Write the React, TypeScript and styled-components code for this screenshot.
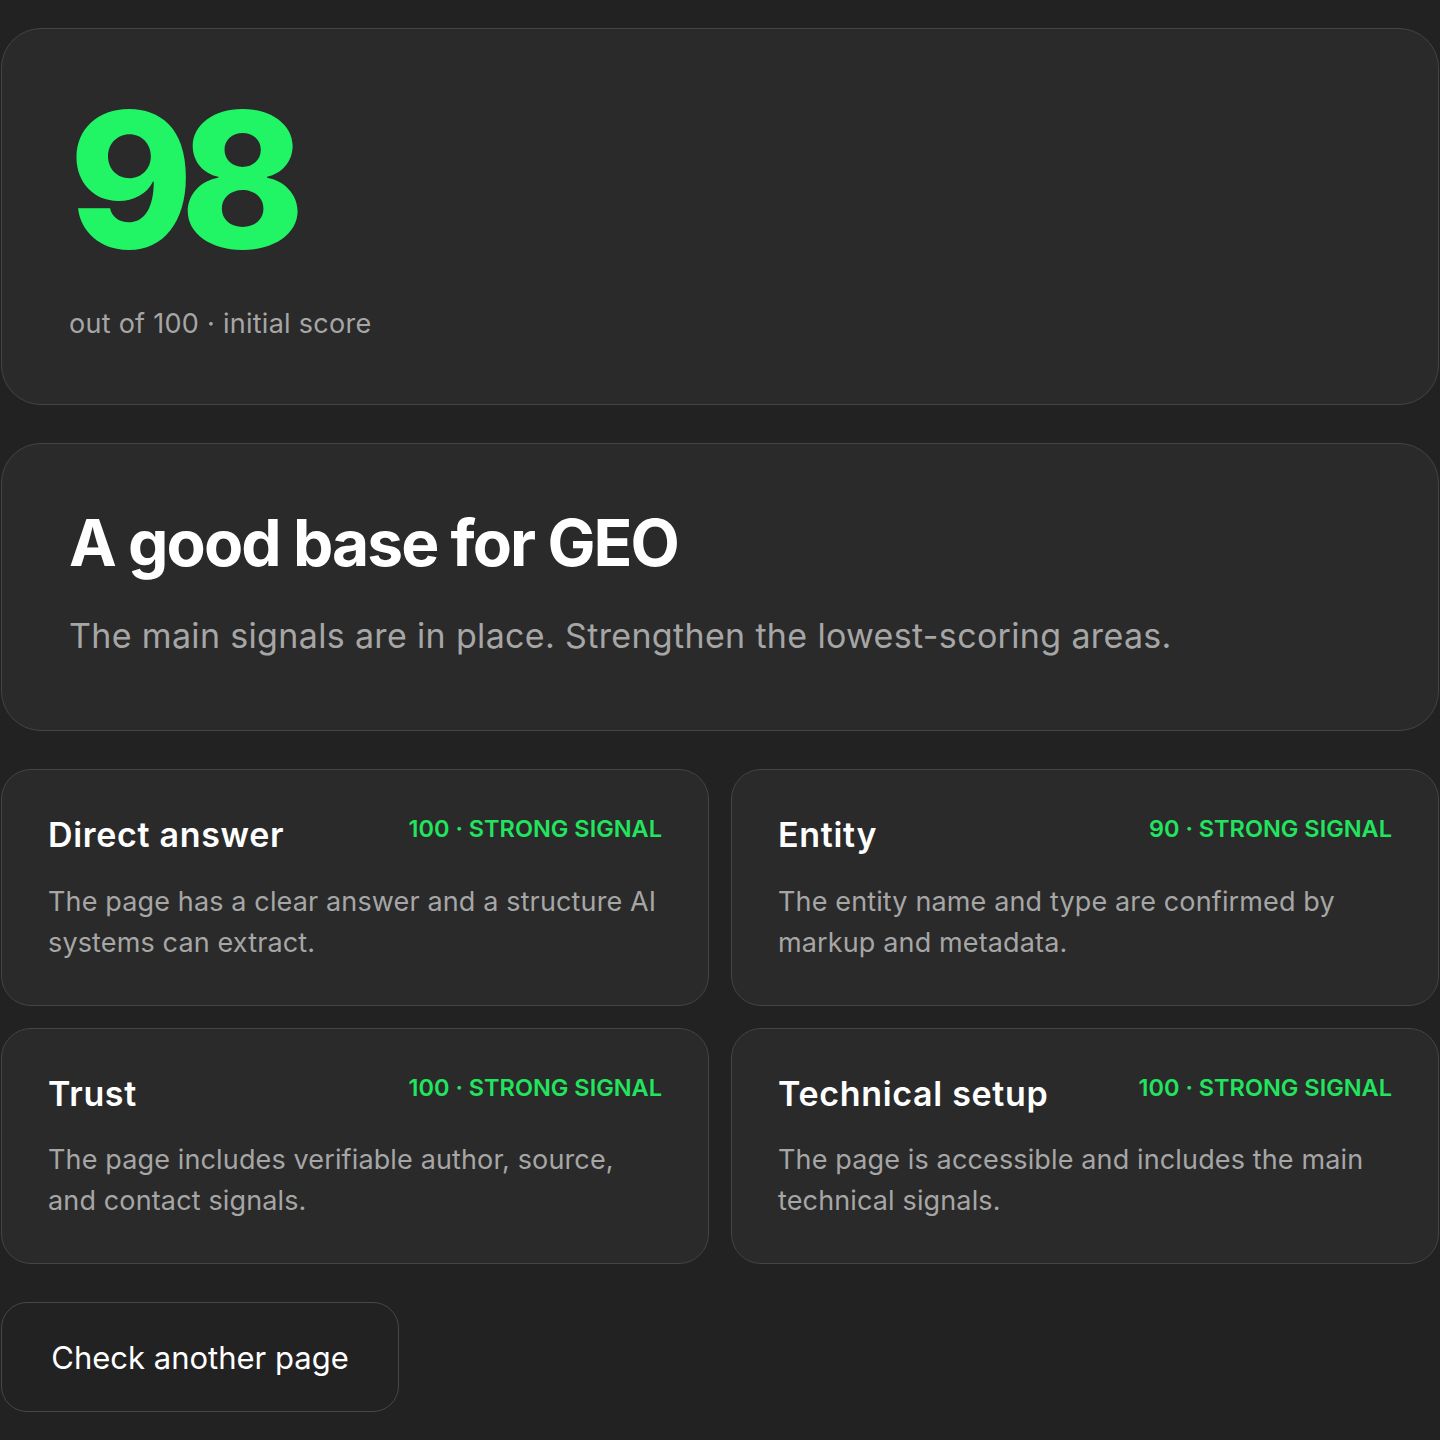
import React from 'react';
import styled, {createGlobalStyle} from 'styled-components';

const GlobalStyle = createGlobalStyle`
  * {
    box-sizing: border-box;
  }
  body {
    margin: 0;
    background: #222222;
    font-family: Inter, "Noto Sans", sans-serif;
  }
`

type SignalType = {
    title: string
    score: number
    text: string
}

const signals: SignalType[] = [
    {title: 'Direct answer', score: 100, text: 'The page has a clear answer and a structure AI systems can extract.'},
    {title: 'Entity', score: 90, text: 'The entity name and type are confirmed by markup and metadata.'},
    {title: 'Trust', score: 100, text: 'The page includes verifiable author, source, and contact signals.'},
    {title: 'Technical setup', score: 100, text: 'The page is accessible and includes the main technical signals.'},
]

const SignalCard = (props: { signal: SignalType }) => {
    return (
        <Card>
            <CardHead>
                <CardTitle>{props.signal.title}</CardTitle>
                <Badge>{props.signal.score} · STRONG SIGNAL</Badge>
            </CardHead>
            <CardText>{props.signal.text}</CardText>
        </Card>
    );
};

export default function App() {
    return (
        <>
            <GlobalStyle/>
            <Page>
                <ScorePanel>
                    <Score>98</Score>
                    <ScoreNote>out of 100 · initial score</ScoreNote>
                </ScorePanel>
                <SummaryPanel>
                    <Headline>A good base for GEO</Headline>
                    <Lead>The main signals are in place. Strengthen the lowest-scoring areas.</Lead>
                </SummaryPanel>
                <Grid>
                    {signals.map(s => <SignalCard key={s.title} signal={s}/>)}
                </Grid>
                <Button>Check another page</Button>
            </Page>
        </>
    );
}

const Page = styled.div`
  display: flex;
  flex-direction: column;
  align-items: stretch;
  gap: 38px;
  padding: 28px 1px 40px;
`
const Panel = styled.section`
  background: #2a2a2a;
  border: 1px solid #444444;
  border-radius: 40px;
`
const ScorePanel = styled(Panel)`
  padding: 57px 67px 61px;
`
const Score = styled.div`
  font-size: 188px;
  font-weight: 800;
  line-height: 1;
  letter-spacing: -0.07em;
  color: #22f565;
`
const ScoreNote = styled.div`
  margin-top: 31px;
  font-size: 27px;
  line-height: 1.4;
  letter-spacing: 0.01em;
  color: #a6a6a6;
`
const SummaryPanel = styled(Panel)`
  padding: 64px 67px 70px;
`
const Headline = styled.h1`
  margin: 0;
  font-size: 64px;
  font-weight: 700;
  line-height: 1.1;
  letter-spacing: -0.03em;
  color: #ffffff;
`
const Lead = styled.p`
  margin: 34px 0 0;
  font-size: 34px;
  line-height: 1.4;
  letter-spacing: 0.01em;
  color: #a6a6a6;
`
const Grid = styled.div`
  display: grid;
  grid-template-columns: 1fr 1fr;
  gap: 22px;
`
const Card = styled.div`
  background: #2a2a2a;
  border: 1px solid #444444;
  border-radius: 30px;
  padding: 45px 46px 42px;
`
const CardHead = styled.div`
  display: flex;
  justify-content: space-between;
  align-items: flex-start;
  gap: 16px;
`
const CardTitle = styled.h3`
  margin: 0;
  font-size: 34px;
  font-weight: 600;
  line-height: 1.2;
  letter-spacing: 0.02em;
  color: #ffffff;
`
const Badge = styled.span`
  font-size: 23.5px;
  font-weight: 600;
  line-height: 1.2;
  color: #22e45f;
  white-space: nowrap;
`
const CardText = styled.p`
  margin: 25px 0 0;
  font-size: 27px;
  line-height: 41px;
  letter-spacing: 0.005em;
  color: #a6a6a6;
`
const Button = styled.button`
  align-self: flex-start;
  width: 398px;
  height: 110px;
  background: #222222;
  border: 1px solid #474747;
  border-radius: 26px;
  font-family: Inter, "Noto Sans", sans-serif;
  font-size: 31px;
  color: #ffffff;
  cursor: pointer;
`
